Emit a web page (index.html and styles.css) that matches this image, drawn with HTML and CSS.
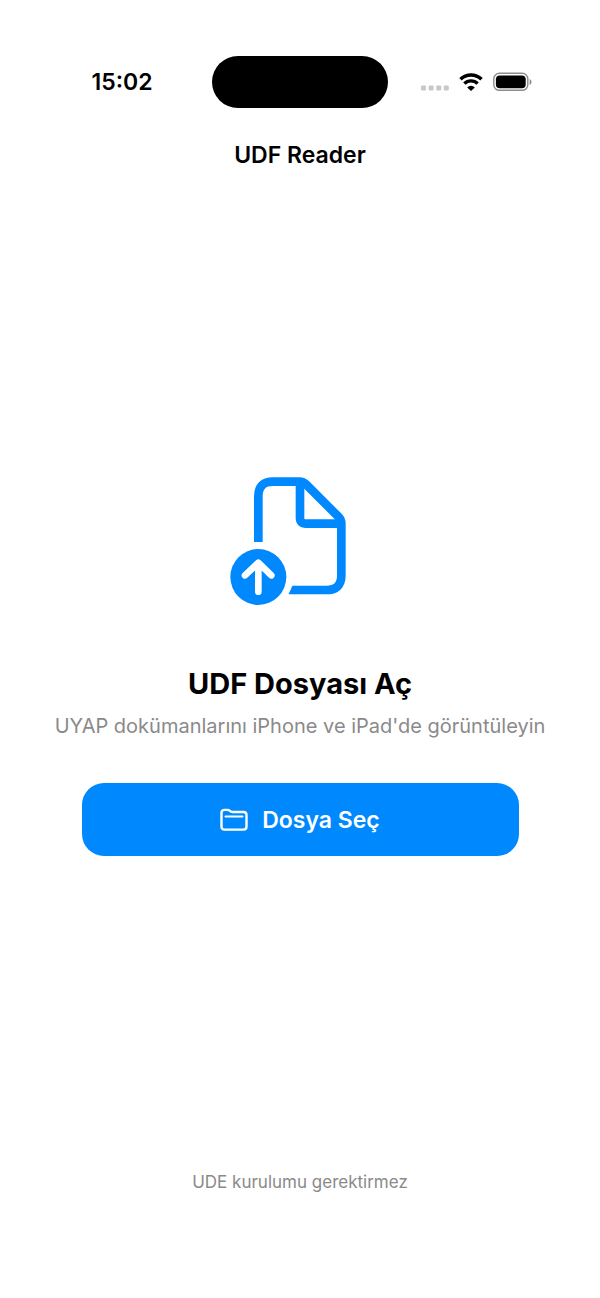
FILE: index.html
```html
<!DOCTYPE html>
<html lang="tr">
<head>
<meta charset="utf-8">
<meta name="viewport" content="width=device-width, initial-scale=1">
<title>UDF Reader</title>
<link rel="stylesheet" href="styles.css">
</head>
<body>
<div class="status-bar">
  <time class="clock">15:02</time>
  <div class="island"></div>
  <div class="indicators">
    <svg class="signal" viewBox="0 0 28 6" aria-hidden="true">
      <rect x="0" y="0.5" width="5" height="5" rx="1"/>
      <rect x="7.6" y="0.5" width="5" height="5" rx="1"/>
      <rect x="15.2" y="0.5" width="5" height="5" rx="1"/>
      <rect x="22.8" y="0.5" width="5" height="5" rx="1"/>
    </svg>
    <svg class="wifi" viewBox="0 0 24 18" aria-hidden="true">
      <path d="M1.5 6.3A15 15 0 0 1 22.5 6.3" fill="none" stroke="#000" stroke-width="3.6"/>
      <path d="M5.4 10.6A9.4 9.4 0 0 1 18.6 10.6" fill="none" stroke="#000" stroke-width="3.4"/>
      <path d="M12 18L8.2 14.4A5.4 5.4 0 0 1 15.8 14.4Z"/>
    </svg>
    <svg class="battery" viewBox="0 0 39 20" aria-hidden="true">
      <rect x="0.8" y="1.3" width="34" height="17" rx="5.6" fill="none" stroke="#8c8c8c" stroke-width="1.4"/>
      <rect x="2.9" y="3.4" width="29.8" height="12.8" rx="3.8"/>
      <path d="M36.6 7v6c1.2-.5 1.9-1.6 1.9-3s-.7-2.5-1.9-3z" fill="#8c8c8c"/>
    </svg>
  </div>
</div>
<header class="nav-bar"><h1 class="nav-title">UDF Reader</h1></header>
<main class="content">
  <svg class="doc-icon" viewBox="15 30 450 396" aria-hidden="true">
    <g fill="none" stroke="#0088ff" stroke-width="26">
      <path d="M115 231V94Q115 50 159 50H238Q250 50 259 59L355 155Q364 164 364 176V331Q364 375 320 375H222"/>
      <path d="M240 52V158Q240 176 258 176H362"/>
    </g>
    <path d="M217 362H224V388H206Z" fill="#0088ff"/>
    <circle cx="115" cy="336" r="84" fill="#0088ff"/>
    <path d="M115 380V294M75 331L115 293L154 331" fill="none" stroke="#fff" stroke-width="20" stroke-linecap="round" stroke-linejoin="round"/>
  </svg>
  <h2 class="title">UDF Dosyası Aç</h2>
  <p class="subtitle">UYAP dokümanlarını iPhone ve iPad'de görüntüleyin</p>
  <button class="pick-button" type="button">
    <svg class="folder" viewBox="0 0 28 24" aria-hidden="true">
      <g fill="none" stroke="#fff" stroke-width="2.4" stroke-linecap="round" stroke-linejoin="round">
        <path d="M1.5 5Q1.5 1.9 4.6 1.9H7.6Q8.8 1.9 9.7 2.7L10.6 3.4Q11.4 4 12.6 4H23.4Q26.5 4 26.5 7.1V18.5Q26.5 21.6 23.4 21.6H4.6Q1.5 21.6 1.5 18.5Z"/>
        <path d="M5.5 8.5H22.5" stroke-width="2"/>
      </g>
    </svg>
    <span>Dosya Seç</span>
  </button>
</main>
<footer class="note">UDE kurulumu gerektirmez</footer>
</body>
</html>
```
FILE: styles.css
```css
* {
  box-sizing: border-box;
}

body {
  margin: 0;
  min-height: 100vh;
  display: flex;
  flex-direction: column;
  background: #fff;
  color: #000;
  font-family: Inter, "Liberation Sans", sans-serif;
}

h1, h2, p {
  margin: 0;
}

.status-bar {
  display: grid;
  grid-template-columns: 1fr auto 1fr;
  align-items: center;
  justify-items: center;
  padding: 56px 32px 0;
}

.clock {
  font-size: 23px;
  font-weight: 600;
}

.island {
  width: 176px;
  height: 52px;
  border-radius: 26px;
  background: #000;
}

.indicators {
  display: flex;
  align-items: center;
  gap: 10px;
  padding-right: 3px;
}

.signal {
  width: 28px;
  height: 6px;
  margin-top: 12px;
  fill: #c8c8c8;
}

.wifi {
  width: 24px;
  height: 18px;
}

.battery {
  width: 39px;
  height: 20px;
}

.nav-bar {
  padding: 32px 16px;
  text-align: center;
}

.nav-title {
  font-size: 23px;
  font-weight: 600;
  line-height: 30px;
}

.content {
  flex: 1;
  display: flex;
  flex-direction: column;
  align-items: center;
  justify-content: center;
  padding: 0 32px 42px;
  text-align: center;
}

.doc-icon {
  width: 150px;
  height: 132px;
}

.title {
  margin-top: 57px;
  font-size: 29px;
  font-weight: 700;
  line-height: 40px;
}

.subtitle {
  margin-top: 8px;
  color: #8a8a8a;
  font-size: 20px;
  line-height: 28px;
}

.pick-button {
  display: flex;
  align-items: center;
  justify-content: center;
  gap: 14px;
  width: calc(100% - 99px);
  margin-top: 43px;
  padding: 21px 20px 19px;
  border: 0;
  border-radius: 22px;
  background: #0088ff;
  color: #fff;
  font: inherit;
  font-size: 23px;
  font-weight: 600;
  line-height: 33px;
}

.folder {
  width: 28px;
  height: 24px;
}

.note {
  padding: 0 16px 104px;
  color: #8a8a8a;
  font-size: 17px;
  line-height: 24px;
  text-align: center;
}
```
